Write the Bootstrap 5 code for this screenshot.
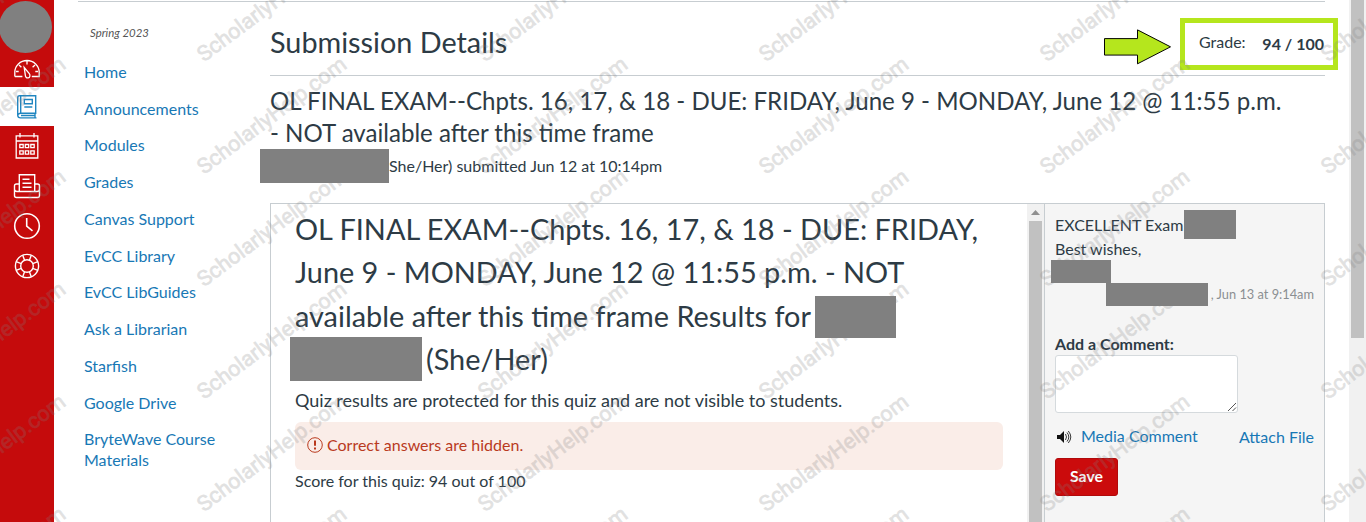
<!DOCTYPE html>
<html lang="en">
<head>
<meta charset="utf-8">
<title>Submission Details</title>
<meta name="viewport" content="width=device-width, initial-scale=1">
<link href="https://cdn.jsdelivr.net/npm/bootstrap@5.3.0/dist/css/bootstrap.min.css" rel="stylesheet">
<style>
body{font-family:Lato,sans-serif;color:#2d3b45;font-size:16px;line-height:24px;background:#fff}
a{color:#1878b5;text-decoration:none}
.app-shell{height:522px}
.global-nav{width:54px;background:#c50b0c;padding-top:1px}
.avatar-dot{width:53px;height:52px;margin-left:-1px;border-radius:50%;background:#808080}
.g-item{height:40px;color:#fff}
.g-item svg{display:block}
.g-item.dash{height:34px}
.g-item.current{height:39px;background:#fff;color:#2086c0}
.page-area{margin-left:24px;border-top:1px solid #c7cdd1;margin-top:1px;width:1247px}
.course-nav{width:192px;padding:22px 6px 0}
.term-label{font-size:11.4px;font-style:italic;line-height:18px;padding-left:6px;color:#555}
.course-nav a{display:block;line-height:21px;margin-bottom:15.75px;width:150px}
.course-nav .links{padding-top:18.8px}
.main-col{width:1055px}
.head-row{height:74px;border-bottom:1px solid #c7cdd1}
.head-row h1{font-size:28.8px;line-height:40px;padding-top:20px}
.grade-box{width:158px;height:52px;border:5px solid #b5e61d;margin:16px -13px 0 8px;padding:7px 9px 0 14px}
.assign-title{font-size:24.08px;line-height:32px;padding-top:9px}
.byline{height:34px}
.redact{background:#808080;flex:none;display:inline-block}
.preview-box{height:330px;border:1px solid #c7cdd1;margin-top:20px}
.quiz-pane{width:756px;padding:4px 24px 0}
.quiz-title{font-size:28.86px;line-height:43.2px}
.warn-box{height:48px;background:#faede8;color:#b93a1e;border-radius:6px;padding:0 0 2px 12px}
.scroll-track{background:#f1f1f1;width:17px}
.scroll-thumb{background:#c1c1c1;width:13px}
.comments{background:#f5f5f5;border-left:1px solid #c7cdd1;padding:9px 10px 0}
.note-box{width:183px;height:58px;background:#fff;border:1px solid #d5dadd;border-radius:3px;resize:none;display:block}
.save-btn{--bs-btn-bg:#cb0b0c;--bs-btn-color:#fff;--bs-btn-border-color:#b00a0b;width:63px;height:38px;padding:0 0 2px;font-size:15.8px;border-radius:3px}
.stamp{left:0;top:0;pointer-events:none;z-index:5;opacity:.23}
.stamp text{font:21.5px Roboto,sans-serif;fill:#808080;stroke:#808080;stroke-width:.7}
</style>
</head>
<body class="overflow-hidden">
<div class="app-shell d-flex position-relative overflow-hidden">
  <nav class="global-nav flex-shrink-0">
    <div class="avatar-dot"></div>
    <div class="g-item dash d-flex justify-content-center align-items-center"><svg width="28" height="28" viewBox="0 0 28 28" fill="none" stroke="currentColor" stroke-width="1.3"><path d="M1.8 20.5v-4.3a12.2 11.7 0 0 1 24.4 0v4.3h-7.4M1.8 20.5h7.6M14 5v3.5M6 9l2.4 2.3M22 9l-2.4 2.3M3 15.5h2.7M22.3 15.5H25"/><path d="M11.2 11.5l5.1 6.2c1.2 1.8.6 4-1.1 4.2-1.8.2-2.9-1.1-2.9-2.8z"/></svg></div>
    <div class="g-item current d-flex justify-content-center align-items-center"><svg width="24" height="26" viewBox="0 0 24 26" fill="none" stroke="currentColor" stroke-width="1.4"><path d="M2.700 21.500V3.800c0-1.300.8-2.100 2-2.100h16v17.600H5.500c-1.500 0-2.700 1-2.700 2.300s1.100 2.300 2.700 2.300h16M5.700 2v17M6 21.500h13.500M20 19.300v4.600"/><path d="M9.300 5.500h8v4.200h-8zM9.300 13h8"/></svg></div>
    <div class="g-item d-flex justify-content-center align-items-center"><svg width="26" height="28" viewBox="0 0 26 28" fill="none" stroke="currentColor" stroke-width="1.3"><path d="M2.2 3.8h21.6V26H2.2zM2.2 9h21.6M6 1v4.5M20 1v4.5"/><path d="M5.8 12.500h3.400v3.200H5.800zM11.300 12.500h3.400v3.200h-3.400zM16.800 12.500h3.400v3.200h-3.400zM5.800 18.900h3.400v3.200H5.800zM11.300 18.900h3.400v3.200h-3.400zM16.800 18.900h3.400v3.200h-3.400z"/></svg></div>
    <div class="g-item d-flex justify-content-center align-items-center"><svg width="28" height="26" viewBox="0 0 28 26" fill="none" stroke="currentColor" stroke-width="1.4"><path d="M6.3 18V1.8h15.4V18M9.5 6.3h7M9.5 10.3h9M9.5 14.3h9"/><path d="M6.3 11H3.5c-1.3 0-2 .8-2 2v9.500c0 1.300.7 2 2 2h21c1.300 0 2-.7 2-2V13c0-1.200-.7-2-2-2h-2.800M1.500 16.500c.3 1.300 1 2 2.300 2h20.400c1.300 0 2-.7 2.300-2"/></svg></div>
    <div class="g-item d-flex justify-content-center align-items-center"><svg width="28" height="28" viewBox="0 0 28 28" fill="none" stroke="currentColor" stroke-width="1.6"><circle cx="14" cy="14" r="12.3"/><path d="M13.7 6v8.2l5.8 4.6"/></svg></div>
    <div class="g-item d-flex justify-content-center align-items-center"><svg width="26" height="26" viewBox="-13 -13 26 26" fill="none" stroke="currentColor" stroke-width="1.4"><circle r="11.6"/><circle r="6.3"/><path d="M-4.300-10.800-2.400-5.800M4.300-10.800 2.400-5.800M-4.300 10.800-2.400 5.800M4.300 10.800 2.400 5.800M-10.800-4.300-5.800-2.400M-10.800 4.300-5.800 2.400M10.800-4.300 5.800-2.400M10.800 4.300 5.800 2.400"/></svg></div>
  </nav>

  <div class="page-area d-flex flex-shrink-0">
    <aside class="course-nav flex-shrink-0">
      <div class="term-label">Spring 2023</div>
      <div class="links">
        <a href="#">Home</a><a href="#">Announcements</a><a href="#">Modules</a><a href="#">Grades</a><a href="#">Canvas Support</a><a href="#">EvCC Library</a><a href="#">EvCC LibGuides</a><a href="#">Ask a Librarian</a><a href="#">Starfish</a><a href="#">Google Drive</a><a href="#">BryteWave Course Materials</a>
      </div>
    </aside>

    <main class="main-col flex-shrink-0">
      <div class="head-row d-flex">
        <h1 class="m-0 fw-normal flex-grow-1">Submission Details</h1>
        <svg width="68" height="38" viewBox="0 0 68 38" style="margin-top:25px"><path d="M.5 13.500h33v-9l33 17.500-33 17.500v-9h-33z" transform="translate(0 -1.500) scale(1 .97)" fill="#b5e61d" stroke="#000" stroke-width="1"/></svg>
        <div class="grade-box d-flex justify-content-between flex-shrink-0"><span>Grade:</span><span class="fw-bold" style="padding-top:2px">94 / 100</span></div>
      </div>
      <h2 class="assign-title m-0 fw-normal text-nowrap">OL FINAL EXAM--Chpts. 16, 17, &amp; 18 - DUE: FRIDAY, June 9 - MONDAY, June 12 @ 11:55 p.m.<br>- NOT available after this time frame</h2>
      <div class="byline d-flex align-items-center"><span class="redact" style="width:129px;height:34px;margin-left:-10px"></span><span style="margin-top:-1px">She/Her) submitted Jun 12 at 10:14pm</span></div>

      <section class="preview-box d-flex">
        <div class="quiz-pane flex-shrink-0">
          <h2 class="quiz-title m-0 fw-normal text-nowrap">OL FINAL EXAM--Chpts. 16, 17, &amp; 18 - DUE: FRIDAY,<br>June 9 - MONDAY, June 12 @ 11:55 p.m. - NOT<br>
            <span class="d-flex align-items-center">available after this time frame Results for<span class="redact" style="width:81px;height:42px;margin:2px 0 0 4px"></span></span>
            <span class="d-flex align-items-center" style="height:43.2px"><span class="redact" style="width:132px;height:44px;margin:-3px 4px 0 -5px"></span>(She/Her)</span></h2>
          <p class="m-0 text-nowrap" style="padding-top:6px;height:40px;font-size:18px">Quiz results are protected for this quiz and are not visible to students.</p>
          <div class="warn-box d-flex align-items-center"><svg class="me-1" width="16" height="16" viewBox="0 0 16 16" fill="none" stroke="currentColor"><circle cx="8" cy="8" r="7.3"/><path d="M8 3.5v5.3M8 10.4v2" stroke-width="2"/></svg>Correct answers are hidden.</div>
          <p style="margin:-1px 0 0">Score for this quiz: 94 out of 100</p>
        </div>
        <div class="scroll-track d-flex flex-column align-items-center flex-shrink-0"><svg width="9" height="17" viewBox="0 0 9 17"><path d="M0 11l4.500-5L9 11z" fill="#909090"/></svg><div class="scroll-thumb flex-grow-1"></div></div>
        <div class="comments flex-grow-1">
          <div class="d-flex align-items-center text-nowrap" style="height:24px">EXCELLENT Exam<span class="redact" style="width:52px;height:29px;margin:-2px 0 0 1px"></span></div>
          <div>Best wishes,</div>
          <div class="redact d-block" style="width:60px;height:23px;margin:-1px 0 0 -4px"></div>
          <div class="d-flex align-items-center justify-content-end text-nowrap" style="height:23px;font-size:12.8px;color:#8b8f92"><span class="redact" style="width:102px;height:23px;margin-right:3px"></span><span style="margin-top:-1px">, Jun 13 at 9:14am</span></div>
          <label class="d-block fw-bold" for="note" style="margin:26px 0 -1px">Add a Comment:</label>
          <div class="position-relative" style="width:183px"><textarea id="note" class="note-box"></textarea><svg class="position-absolute bottom-0 end-0" width="11" height="11" viewBox="0 0 11 11" stroke="#555"><path d="M1 9 9 1M5.500 9 9 5.500"/></svg></div>
          <div class="d-flex align-items-center" style="height:45px;padding-top:2px">
            <svg width="18" height="16" viewBox="0 0 18 16"><path d="M2 6h3l4-4v12L5 10H2z" fill="#111"/><path d="M10.500 5q2 3 0 6M12 3.500q3.600 4.500 0 9M13.300 2q5 6 0 12" fill="none" stroke="#222" stroke-width=".9"/></svg>
            <a href="#" style="margin:-2px 0 0 8px">Media Comment</a><a href="#" class="ms-auto">Attach File</a></div>
          <button class="btn save-btn fw-bold">Save</button>
        </div>
      </section>
    </main>
  </div>
  <div class="scroll-track ms-auto d-flex justify-content-center flex-shrink-0"><div class="scroll-thumb" style="height:338px"></div></div>
  <svg class="stamp position-absolute" width="1366" height="522" aria-hidden="true"></svg>
</div>
<script>
// Tile the diagonal site stamp over the page.
const layer = document.querySelector('.stamp');
for (let c = 0; c < 6; c++) for (let r = 0; r < 6; r++) {
  const t = document.createElementNS('http://www.w3.org/2000/svg', 'text');
  t.setAttribute('transform', `translate(${-77 + c * 281} ${62.5 + r * 112.5}) rotate(-36.8)`);
  t.textContent = 'ScholarlyHelp.com';
  layer.appendChild(t);
}
</script>
<script src="https://cdn.jsdelivr.net/npm/bootstrap@5.3.0/dist/js/bootstrap.bundle.min.js"></script>
</body>
</html>
